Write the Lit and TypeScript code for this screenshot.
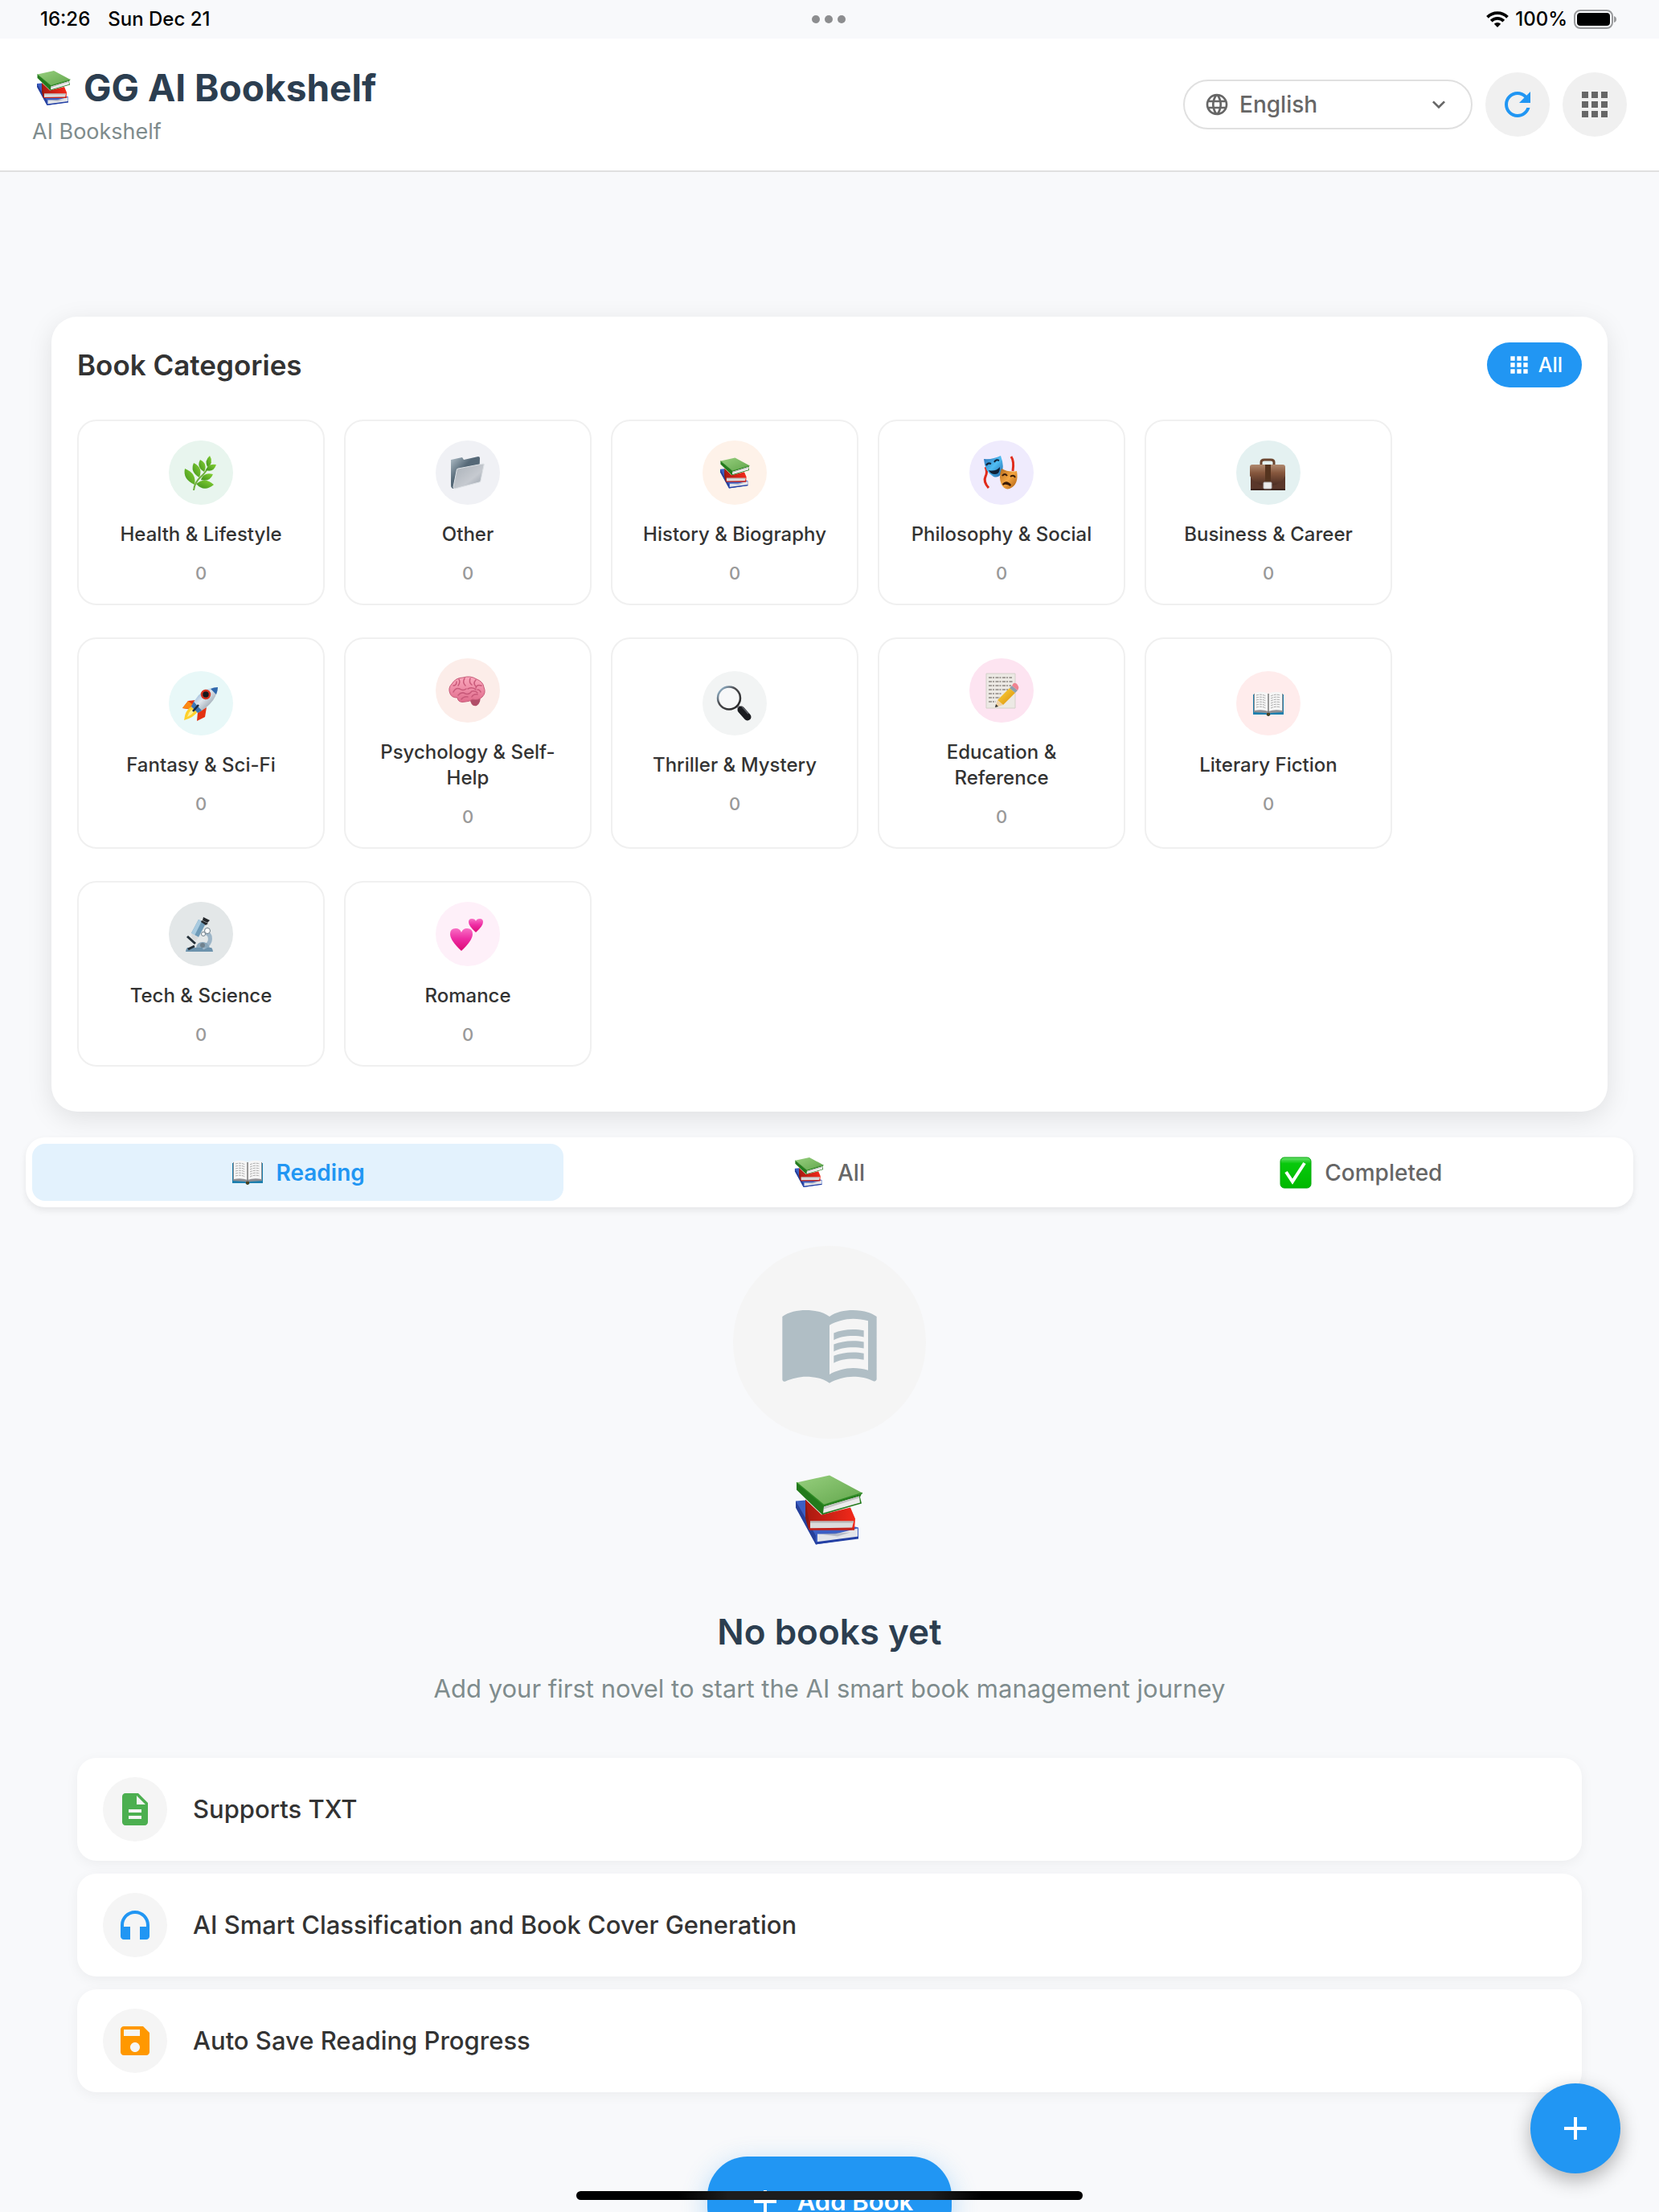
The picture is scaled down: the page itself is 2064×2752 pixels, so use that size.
import { LitElement, html, css, svg } from "lit";
import type { TemplateResult } from "lit";
import { customElement, property, state } from "lit/decorators.js";
import { classMap } from "lit/directives/class-map.js";

const ICONS: Record<string, string> = {
  language:
    "M11.99 2C6.47 2 2 6.48 2 12s4.47 10 9.99 10C17.52 22 22 17.52 22 12S17.52 2 11.99 2zm6.93 6h-2.95c-.32-1.25-.78-2.45-1.38-3.56 1.84.63 3.37 1.91 4.33 3.56zM12 4.04c.83 1.2 1.48 2.53 1.91 3.96h-3.82c.43-1.43 1.08-2.76 1.91-3.96zM4.26 14C4.1 13.36 4 12.69 4 12s.1-1.36.26-2h3.38c-.08.66-.14 1.32-.14 2s.06 1.34.14 2H4.26zm.82 2h2.95c.32 1.25.78 2.45 1.38 3.56-1.84-.63-3.37-1.9-4.33-3.56zm2.95-8H5.08c.96-1.66 2.49-2.93 4.33-3.56C8.81 5.55 8.35 6.75 8.03 8zM12 19.96c-.83-1.2-1.48-2.53-1.91-3.96h3.82c-.43 1.43-1.08 2.76-1.91 3.96zM14.34 14H9.66c-.09-.66-.16-1.32-.16-2s.07-1.35.16-2h4.68c.09.65.16 1.32.16 2s-.07 1.34-.16 2zm.25 5.56c.6-1.11 1.06-2.31 1.38-3.56h2.95c-.96 1.65-2.49 2.93-4.33 3.56zM16.36 14c.08-.66.14-1.32.14-2s-.06-1.34-.14-2h3.38c.16.64.26 1.31.26 2s-.1 1.36-.26 2h-3.38z",
  down: "M7.41 8.59 12 13.17l4.59-4.58L18 10l-6 6-6-6 1.41-1.41z",
  refresh:
    "M17.65 6.35C16.2 4.9 14.21 4 12 4c-4.42 0-7.99 3.58-7.99 8s3.57 8 7.99 8c3.73 0 6.84-2.55 7.73-6h-2.08c-.82 2.33-3.04 4-5.65 4-3.31 0-6-2.69-6-6s2.69-6 6-6c1.66 0 3.14.69 4.22 1.78L13 11h7V4l-2.35 2.35z",
  apps: "M4 8h4V4H4v4zm6 12h4v-4h-4v4zm-6 0h4v-4H4v4zm0-6h4v-4H4v4zm6 0h4v-4h-4v4zm6-10v4h4V4h-4zm-6 4h4V4h-4v4zm6 6h4v-4h-4v4zm0 6h4v-4h-4v4z",
  menuBook:
    "M21 5c-1.11-.35-2.33-.5-3.5-.5-1.95 0-4.05.4-5.5 1.5-1.45-1.1-3.55-1.5-5.5-1.5S2.45 4.9 1 6v14.65c0 .25.25.5.5.5.1 0 .15-.05.25-.05C3.1 20.45 5.05 20 6.5 20c1.95 0 4.05.4 5.5 1.5 1.35-.85 3.8-1.5 5.5-1.5 1.65 0 3.35.3 4.75 1.05.1.05.15.05.25.05.25 0 .5-.25.5-.5V6c-.6-.45-1.25-.75-2-1zm0 13.5c-1.1-.35-2.3-.5-3.5-.5-1.7 0-4.15.65-5.5 1.5V8c1.35-.85 3.8-1.5 5.5-1.5 1.2 0 2.4.15 3.5.5v11.5zM17.5 10.5c.88 0 1.73.09 2.5.26V9.24c-.79-.15-1.64-.24-2.5-.24-1.7 0-3.24.29-4.5.83v1.66c1.13-.64 2.7-.99 4.5-.99zM13 12.49v1.66c1.13-.64 2.7-.99 4.5-.99.88 0 1.73.09 2.5.26V11.9c-.79-.15-1.64-.24-2.5-.24-1.7 0-3.24.3-4.5.83zM17.5 14.33c-1.7 0-3.24.29-4.5.83v1.66c1.13-.64 2.7-.99 4.5-.99.88 0 1.73.09 2.5.26v-1.52c-.79-.16-1.64-.24-2.5-.24z",
  description:
    "M14 2H6c-1.1 0-1.99.9-1.99 2L4 20c0 1.1.89 2 1.99 2H18c1.1 0 2-.9 2-2V8l-6-6zm2 16H8v-2h8v2zm0-4H8v-2h8v2zm-3-5V3.5L18.5 9H13z",
  headphones:
    "M12 3c-4.97 0-9 4.03-9 9v7c0 1.1.9 2 2 2h4v-8H5v-1c0-3.87 3.13-7 7-7s7 3.13 7 7v1h-4v8h4c1.1 0 2-.9 2-2v-7c0-4.97-4.03-9-9-9z",
  save: "M17 3H5c-1.11 0-2 .9-2 2v14c0 1.1.89 2 2 2h14c1.1 0 2-.9 2-2V7l-4-4zm-5 16c-1.66 0-3-1.34-3-3s1.34-3 3-3 3 1.34 3 3-1.34 3-3 3zm3-10H5V5h10v4z",
  add: "M19 13h-6v6h-2v-6H5v-2h6V5h2v6h6v2z",
};

const icon = (name: string) =>
  html`<svg class="icon" viewBox="0 0 24 24" aria-hidden="true"><path fill="currentColor" d=${ICONS[name]} /></svg>`;

const booksArt = svg`
  <defs>
    <linearGradient id="bg" x1="0" y1="0" x2="1" y2="1"><stop offset="0" stop-color="#97cf7e"/><stop offset="1" stop-color="#62a64c"/></linearGradient>
    <linearGradient id="br" x1="0" y1="0" x2="1" y2="0"><stop offset="0" stop-color="#a81a10"/><stop offset="1" stop-color="#f3291a"/></linearGradient>
  </defs>
  <path fill="#3c5fc4" d="M0 32l12-1 4 34 58-1 4 1v13L25 86 0 40z"/>
  <path fill="#26409a" d="M0 32l25 43v11L0 40z"/>
  <path fill="#e3e5ea" d="M27 73l22 0 28-7 0 11-50 7z"/>
  <path fill="#9aa0b0" d="M30 73l38-2-16 5z" opacity=".6"/>
  <path fill="#2440a4" d="M25 83l53-7v3l-53 7z"/>
  <path fill="url(#br)" d="M12 30l20 19 36-9 6 14-1 14-56 0-5-20z"/>
  <path fill="#8c1a12" d="M12 30l4 24v14l-4-15z"/>
  <path fill="#dcdcdc" d="M18 57h54l-2 9H18z"/>
  <path fill="#b4b4b4" d="M18 57h54v2H18z"/>
  <path fill="#c4221a" d="M16 66l57-1v3H17z"/>
  <path fill="#237a1c" d="M1 9l33 27 48-13-2 4 2 8-49 14L1 18z"/>
  <path fill="#ececec" d="M35 39l44-13 1 8-46 13z"/>
  <path fill="#c2c2c2" d="M35 39l44-13v2L35 42z"/>
  <path fill="url(#bg)" d="M1 9L42 0l41 22-48 15z"/>
  <path fill="none" stroke="#2f8b25" stroke-width="1.5" d="M1 9l34 28 48-15"/>`;

const openBookArt = svg`
  <path fill="#1d7fae" d="M1 4h38v25H23l-3 2-3-2H1z"/>
  <path fill="#8f8f93" d="M2 3h36v23l-15 1-3 2-3-2-15-1z"/>
  <path fill="#f6f6f6" d="M3 2q9-3 17 1v22q-8-3-17-1zM37 2q-9-3-17 1v22q8-3 17-1z"/>
  <path fill="none" stroke="#a5a5a5" stroke-width="1" stroke-dasharray="3 1" d="M5 5q6-2 12 1M5 8q6-2 12 1M5 11q6-2 12 1M5 14q6-2 12 1M5 17q6-2 12 1M5 20q6-2 12 1M23 6q6-3 12-1M23 9q6-3 12-1M23 12q6-3 12-1M23 15q6-3 12-1M23 18q6-3 12-1M23 21q6-3 12-1"/>
  <path stroke="#777" stroke-width="1.5" d="M20 3v24"/>
  <path fill="#4a4220" d="M18 27h4v3l-2 1-2-1z"/>`;

const checkArt = svg`
  <defs><linearGradient id="ck" x1="0" y1="0" x2="0" y2="1"><stop offset="0" stop-color="#6be06f"/><stop offset=".2" stop-color="#08c90c"/><stop offset="1" stop-color="#00b800"/></linearGradient></defs>
  <rect x="1" y="1" width="38" height="38" rx="5" fill="url(#ck)" stroke="#04a80a" stroke-width="1"/>
  <path fill="none" stroke="#fff" stroke-width="4" d="M8 19l8 12L31 8"/>`;

const ART: Record<string, TemplateResult> = {
  leaf: svg`
    <defs><linearGradient id="lf" x1="0" y1="1" x2="1" y2="0"><stop offset="0" stop-color="#3f8f1c"/><stop offset="1" stop-color="#86d334"/></linearGradient></defs>
    <path fill="none" stroke="#6fae3c" stroke-width="2" d="M31 62Q32 52 40 45T52 27"/>
    <g fill="url(#lf)">
      <path d="M32 55Q17 48 20 35q15 6 12 20z"/>
      <path d="M38 46q-12-7-7-18 12 6 7 18z"/>
      <path d="M44 39q-10-6-5-15 10 5 5 15z"/>
      <path d="M48 33q-4-8 3-14 5 8-3 14z"/>
      <path d="M46 37q3-9 13-7-3 10-13 7z"/>
      <path d="M40 49q3-10 15-7-4 10-15 7z"/>
      <path d="M34 54q11-9 22 1-12 10-22-1z"/>
    </g>`,
  folder: svg`
    <defs>
      <linearGradient id="fb" x1="0" y1="0" x2="1" y2="1"><stop offset="0" stop-color="#b3c1ca"/><stop offset=".4" stop-color="#556877"/></linearGradient>
      <linearGradient id="ff" x1="0" y1="0" x2="1" y2="1"><stop offset="0" stop-color="#a8afb7"/><stop offset=".6" stop-color="#c6cad0"/><stop offset="1" stop-color="#8f98a3"/></linearGradient>
    </defs>
    <path fill="url(#fb)" d="M19 24l14-3 2 3 18-4q2 0 2 2l-1 26-32 12q-3-1-3-4z"/>
    <path fill="url(#ff)" stroke="#dfe3e7" stroke-width="1" d="M28 35l31-6q2 0 1 2l-4 19q0 2-2 2l-30 8q-2 0-2-2l4-20q0-3 2-3z"/>`,
  masks: svg`
    <defs>
      <linearGradient id="mb" x1="0" y1="0" x2="1" y2="1"><stop offset="0" stop-color="#2a6cb4"/><stop offset=".5" stop-color="#4fbdf2"/><stop offset="1" stop-color="#1f62a8"/></linearGradient>
      <linearGradient id="mo" x1="0" y1="0" x2="1" y2="1"><stop offset="0" stop-color="#b56a1c"/><stop offset=".5" stop-color="#f5a742"/><stop offset="1" stop-color="#a8590f"/></linearGradient>
    </defs>
    <path fill="none" stroke="#e02b1b" stroke-width="3" d="M20 33q3 6 0 12t4 14M52 20q4 6 2 18"/>
    <path fill="url(#mb)" d="M18 23q11 1 21-4 5 14 1 22-4 6-10 4-11-6-12-22z"/>
    <path fill="none" stroke="#10233a" stroke-width="2" d="M21 31q2-4 6-2M31 27q2-4 6-2"/>
    <path fill="#0e2036" d="M24 37q9 2 14-4 0 9-6 9t-8-5z"/>
    <path fill="url(#mo)" d="M40 35q9 5 19 3 3 17-9 22-6 2-10-5-4-9 0-20z"/>
    <path fill="none" stroke="#3a1c08" stroke-width="2" d="M41 44q3-4 6 0M51 45q4-3 6 1"/>
    <path fill="#3a1c08" d="M41 54q5-6 11 1l-1 2q-6-4-9-1z"/>`,
  briefcase: svg`
    <defs><linearGradient id="bc" x1="0" y1="0" x2="0" y2="1"><stop offset="0" stop-color="#b08a70"/><stop offset=".4" stop-color="#86573d"/><stop offset="1" stop-color="#4a2c22"/></linearGradient></defs>
    <path fill="none" stroke="#6b4630" stroke-width="3" d="M31 31v-4q0-3 4-3h8q4 0 4 3v4"/>
    <path fill="#5a372a" d="M18 40h43v19q0 3-3 3H21q-3 0-3-3z"/>
    <path fill="url(#bc)" d="M20 30h38q3 0 3 3v11q-4 10-16 12H34q-12-2-17-12V33q0-3 3-3z"/>
    <path fill="#55341f" d="M36 30h7v22h-7z"/>
    <path fill="#3c241c" d="M18 60h43v2H18z"/>
    <rect x="34" y="52" width="10" height="8" rx="1" fill="#ececec" stroke="#b5b5b5"/>`,
  rocket: svg`
    <defs><linearGradient id="rk" x1="0" y1="0" x2="1" y2="1"><stop offset="0" stop-color="#4d8ccc"/><stop offset=".45" stop-color="#dfe6ec"/><stop offset="1" stop-color="#5d6e7e"/></linearGradient></defs>
    <path fill="#e33212" d="M33 36l-9 1-7 9 12 2zM47 45l-2 12-10 5 1-11z"/>
    <path fill="#fb8a13" d="M24 37l-7 9 9 1 3-6z"/>
    <path fill="#ffd02b" d="M28 44q-8 5-9 17 12-3 18-12z"/>
    <path fill="#fff09a" d="M28 48q-4 4-5 9 6-3 9-7z"/>
    <path fill="url(#rk)" d="M61 20q-14 0-24 10-6 7-9 14l8 8q8-4 15-11 9-9 10-21z"/>
    <path fill="#2f68ad" d="M61 20q-5 0-9 2l7 7q2-5 2-9z"/>
    <path fill="#3b76b5" d="M31 38l-3 6 8 8 5-3z"/>
    <path stroke="#1c2b3c" stroke-width="2.5" d="M30 50l7-8"/>
    <circle cx="46" cy="29" r="5" fill="#16181c" stroke="#d5321e" stroke-width="2.5"/>`,
  brain: svg`
    <defs><linearGradient id="bn" x1="0" y1="0" x2="0" y2="1"><stop offset="0" stop-color="#fba9bd"/><stop offset="1" stop-color="#e06c8c"/></linearGradient></defs>
    <path fill="#b14d68" d="M42 49l13-2q2 8-4 12-7 2-9-10z"/>
    <path fill="url(#bn)" stroke="#c75a78" stroke-width="1" d="M18 44q-3-7 2-12 5-8 14-8 9-3 17 2 8 3 9 10 3 7-2 12-5 5-12 3-4 3-9 3-9 2-10-5-7 0-9-5z"/>
    <path fill="none" stroke="#c95a7a" stroke-width="1.5" stroke-linecap="round" d="M22 34q4 0 4-5M29 26q2 4-1 8M36 25q-3 5 1 9M43 25q-2 5 2 8M50 27q-4 4 0 8M57 34q-6-2-7 3M22 42q3-6 8-4 4 3 8 0M28 46q4-5 9-2 4 2 8-3 5-1 7 2M40 38q6-3 10 1M45 48q2-4 7-3M56 42q-1-3-4-3M32 51q3-4 8-3"/>`,
  magnifier: svg`
    <defs><linearGradient id="mg" x1="0" y1="0" x2="1" y2="1"><stop offset="0" stop-color="#a8d3f0"/><stop offset=".4" stop-color="#4c4c50"/><stop offset="1" stop-color="#222"/></linearGradient></defs>
    <path stroke="#8d8d92" stroke-width="4" d="M43 43l5 5"/>
    <path stroke="#1b1c20" stroke-width="9" stroke-linecap="round" d="M48 48l8 9"/>
    <path stroke="#5c5e66" stroke-width="1.5" d="M49 44l8 9"/>
    <circle cx="33" cy="33.500" r="14" fill="#f7f8f9" stroke="url(#mg)" stroke-width="2.500"/>`,
  memo: svg`
    <defs><linearGradient id="pc" x1="0" y1="0" x2="1" y2="1"><stop offset="0" stop-color="#ffd93f"/><stop offset="1" stop-color="#d88b08"/></linearGradient></defs>
    <path fill="#ece9e4" stroke="#d4d0ca" d="M21 19h36v43H21z"/>
    <path fill="none" stroke="#8d8882" stroke-width="1.300" stroke-dasharray="4 1 2 1.500" d="M24 24h29M24 29h30M24 34h28M24 39h24M24 44h16M24 49h14M24 54h9"/>
    <path fill="url(#pc)" d="M50 37l7 6-15 15-7-6z"/>
    <path fill="#efd1a0" d="M35 52l7 6-10 3z"/>
    <path fill="#333" d="M33 57l3 3-4 1z"/>
    <path fill="#8da0ab" d="M50 37l3-3 7 6-3 3z"/>
    <path fill="#ef8390" d="M53 34l2-3q3-1 5 2t1 5l-1 2z"/>`,
  microscope: svg`
    <path fill="#6d93ad" d="M23 57h30q2 2 2 5H21q0-3 2-5z"/>
    <path fill="none" stroke="#9db5c7" stroke-width="5" d="M45 38q8 2 6 11-2 6-9 8"/>
    <path fill="#8aa7bb" d="M34 57q1-7 8-7t9 7z"/>
    <circle cx="42" cy="54" r="3" fill="#71828e"/>
    <path stroke="#25313a" stroke-width="3" d="M23 43l10 9M24 59l8-4"/>
    <path fill="#6f9bb8" d="M37 22l9 5-9 17-9-5z"/>
    <path fill="#a9cbe0" d="M37 22l4 2-9 18-4-3z"/>
    <path fill="#23272b" d="M43 19l8 4-3 3-6-3zM41 23l8 4-3 2-6-4z"/>
    <path fill="#d8dadb" d="M28 39l9 5-3 4-5-2z"/>
    <circle cx="48" cy="36" r="3.500" fill="#fff" stroke="#6d7d88" stroke-width="1"/>
    <circle cx="43" cy="40" r="2.500" fill="#fff" stroke="#6d7d88" stroke-width="1"/>`,
  hearts: svg`
    <defs><linearGradient id="ht" x1="0" y1="0" x2="0" y2="1"><stop offset="0" stop-color="#f86fc4"/><stop offset=".45" stop-color="#ee2ea4"/><stop offset="1" stop-color="#dc0a74"/></linearGradient></defs>
    <path fill="url(#ht)" d="M32 61q-14-13-14-21 0-7 7-7 5 0 7 5 2-5 7-5 7 0 7 7 0 8-14 21z"/>
    <path fill="url(#ht)" d="M50 38q-9-8-9-13 0-4 4-4 4 0 5 3 1-3 5-3t4 4q0 5-9 13z"/>`,
};

const art = (name: string) => {
  if (name === "books")
    return html`<svg class="art-books" viewBox="0 0 84 86" aria-hidden="true">${booksArt}</svg>`;
  if (name === "open")
    return html`<svg class="art-open" viewBox="0 0 40 31" aria-hidden="true">${openBookArt}</svg>`;
  if (name === "check")
    return html`<svg class="art-check" viewBox="0 0 40 40" aria-hidden="true">${checkArt}</svg>`;
  return html`<svg class="art-full" viewBox="0 0 80 80" aria-hidden="true">${ART[name]}</svg>`;
};

const base = css`
  *, *::before, *::after { box-sizing: border-box; }
  button, select { font: inherit; color: inherit; border: 0; background: none; margin: 0; padding: 0; }
  h1, h2, p, ul { margin: 0; padding: 0; }
  svg { display: block; flex: none; }
`;

@customElement("status-bar")
class StatusBar extends LitElement {
  static styles = [base, css`
    :host { display: grid; grid-template-columns: 1fr auto 1fr; align-items: center; height: 48px; padding: 0 52px 0 50px; color: #000; font-size: 24px; font-weight: 500; line-height: 28px; flex: none; }
    .when { display: flex; gap: 22px; }
    .dots { display: flex; gap: 6px; }
    .dot { width: 10px; height: 10px; border-radius: 50%; background: #8c8d8f; }
    .power { display: flex; align-items: center; justify-content: flex-end; gap: 8px; }
    .wifi { width: 28px; height: 20px; }
    .battery { width: 54px; height: 24px; }
  `];
  render() {
    return html`
      <div class="when"><span>16:26</span><span>Sun Dec 21</span></div>
      <div class="dots"><span class="dot"></span><span class="dot"></span><span class="dot"></span></div>
      <div class="power">
        <svg class="wifi" viewBox="0 0 28 20" aria-hidden="true">
          <g fill="none" stroke="#000" stroke-width="3.800"><path d="M1.500 7.300a17.800 17.800 0 0 1 25 0"/><path d="M6.200 12.200a11 11 0 0 1 15.600 0"/></g>
          <path d="M14 20l-4.200-4.300a6 6 0 0 1 8.400 0z"/>
        </svg>
        <span>100%</span>
        <svg class="battery" viewBox="0 0 54 24" aria-hidden="true">
          <rect x="1" y="1" width="47" height="22" rx="7" fill="none" stroke="#98999b" stroke-width="2"/>
          <rect x="4" y="4" width="41" height="16" rx="4" />
          <path fill="#98999b" d="M50 8q3 1 3 4t-3 4z"/>
        </svg>
      </div>`;
  }
}

@customElement("shelf-header")
class ShelfHeader extends LitElement {
  static styles = [base, css`
    :host { display: flex; justify-content: space-between; align-items: center; padding: 31px 40px; background: #fff; border-bottom: 2px solid #e0e0e0; flex: none; }
    .brand { display: flex; flex-direction: column; gap: 8px; }
    .title { display: flex; align-items: center; gap: 16px; padding-left: 6px; font-size: 46px; line-height: 60px; font-weight: 700; color: #2c3e50; }
    .title .art-books { width: 42px; height: 43px; }
    .sub { font-size: 27px; line-height: 34px; color: #7f8c8d; }
    .tools { display: flex; align-items: center; gap: 16px; }
    .lang { display: flex; align-items: center; width: 360px; height: 62px; padding: 0 24px; border: 2px solid #e0e0e0; border-radius: 31px; color: #666; }
    .lang .icon { width: 32px; height: 32px; }
    .choice { flex: 1; min-width: 0; appearance: none; padding-left: 12px; font-size: 28px; line-height: 34px; font-weight: 500; outline: none; }
    .round { display: grid; place-items: center; width: 80px; height: 80px; border-radius: 50%; background: #f0f0f0; color: #666; }
    .round .icon { width: 48px; height: 48px; }
    .accent { color: #2196f3; }
  `];
  render() {
    return html`
      <div class="brand">
        <h1 class="title">${art("books")}<span>GG AI Bookshelf</span></h1>
        <p class="sub">AI Bookshelf</p>
      </div>
      <div class="tools">
        <label class="lang">
          ${icon("language")}
          <select class="choice" aria-label="Language"><option>English</option></select>
          ${icon("down")}
        </label>
        <button class="round accent" aria-label="Refresh">${icon("refresh")}</button>
        <button class="round" aria-label="Apps">${icon("apps")}</button>
      </div>`;
  }
}

interface Category { name: string; art: string; tint: string; count: number; }

const CATEGORIES: Category[] = [
  { name: "Health & Lifestyle", art: "leaf", tint: "#e8f5ee", count: 0 },
  { name: "Other", art: "folder", tint: "#f0f1f5", count: 0 },
  { name: "History & Biography", art: "books", tint: "#fef2e9", count: 0 },
  { name: "Philosophy & Social", art: "masks", tint: "#efebfd", count: 0 },
  { name: "Business & Career", art: "briefcase", tint: "#e4f1f1", count: 0 },
  { name: "Fantasy & Sci-Fi", art: "rocket", tint: "#e8f8f8", count: 0 },
  { name: "Psychology & Self-Help", art: "brain", tint: "#fcede9", count: 0 },
  { name: "Thriller & Mystery", art: "magnifier", tint: "#f2f4f4", count: 0 },
  { name: "Education & Reference", art: "memo", tint: "#fde4f1", count: 0 },
  { name: "Literary Fiction", art: "open", tint: "#ffecec", count: 0 },
  { name: "Tech & Science", art: "microscope", tint: "#e3e7e8", count: 0 },
  { name: "Romance", art: "hearts", tint: "#fef0f9", count: 0 },
];

@customElement("category-panel")
class CategoryPanel extends LitElement {
  @property({ attribute: false }) categories: Category[] = [];
  static styles = [base, css`
    :host { display: block; padding: 32px 32px 56px; border-radius: 32px; background: #fff; box-shadow: 0 8px 32px rgba(0, 0, 0, 0.1); }
    .head { display: flex; justify-content: space-between; align-items: center; margin-bottom: 40px; }
    .heading { font-size: 35px; line-height: 44px; font-weight: 600; color: #333; }
    .all { display: flex; align-items: center; gap: 8px; height: 56px; padding: 0 24px; border-radius: 28px; background: #2196f3; color: #fff; font-size: 25px; line-height: 32px; font-weight: 500; }
    .all .icon { width: 32px; height: 32px; }
    .grid { display: grid; grid-template-columns: repeat(auto-fill, 308px); gap: 40px 24px; }
    .card { display: flex; flex-direction: column; align-items: center; justify-content: center; padding: 24px 32px; border: 2px solid #f0f0f0; border-radius: 24px; background: #fff; }
    .disc { display: grid; place-items: center; width: 80px; height: 80px; border-radius: 50%; }
    .art-full { width: 80px; height: 80px; }
    .disc .art-books { width: 37px; height: 39px; }
    .disc .art-open { width: 40px; height: 31px; }
    .name { margin: 21px 0 19px; font-size: 24px; line-height: 32px; font-weight: 500; color: #333; text-align: center; }
    .count { font-size: 22px; line-height: 27px; font-weight: 500; color: #999; }
  `];
  render() {
    return html`
      <div class="head">
        <h2 class="heading">Book Categories</h2>
        <button class="all">${icon("apps")}<span>All</span></button>
      </div>
      <div class="grid">
        ${this.categories.map((c) => html`
          <button class="card">
            <span class="disc" style="background:${c.tint}">${art(c.art)}</span>
            <span class="name">${c.name}</span>
            <span class="count">${c.count}</span>
          </button>`)}
      </div>`;
  }
}

const TABS = [
  { id: "reading", label: "Reading", art: "open" },
  { id: "all", label: "All", art: "books" },
  { id: "completed", label: "Completed", art: "check" },
];

@customElement("shelf-tabs")
class ShelfTabs extends LitElement {
  @state() private active = "reading";
  static styles = [base, css`
    :host { display: flex; padding: 8px; border-radius: 24px; background: #fff; box-shadow: 0 4px 8px rgba(0, 0, 0, 0.08); }
    .tab { flex: 1; display: flex; align-items: center; justify-content: center; gap: 16px; height: 71px; border-radius: 16px; color: #666; font-size: 28px; line-height: 34px; font-weight: 500; }
    .on { background: #e3f2fd; color: #2196f3; font-weight: 600; }
    .art-open { width: 40px; height: 31px; }
    .art-books { width: 38px; height: 37px; }
    .art-check { width: 40px; height: 40px; }
  `];
  render() {
    return TABS.map((t) => html`
      <button class=${classMap({ tab: true, on: t.id === this.active })} aria-pressed=${t.id === this.active}
        @click=${() => (this.active = t.id)}>${art(t.art)}<span>${t.label}</span></button>`);
  }
}

const FEATURES = [
  { label: "Supports TXT", icon: "description", tone: "green" },
  { label: "AI Smart Classification and Book Cover Generation", icon: "headphones", tone: "blue" },
  { label: "Auto Save Reading Progress", icon: "save", tone: "orange" },
];

@customElement("empty-shelf")
class EmptyShelf extends LitElement {
  static styles = [base, css`
    :host { display: flex; flex-direction: column; align-items: center; padding: 48px 64px 0; }
    .disc { display: grid; place-items: center; width: 240px; height: 240px; border-radius: 50%; background: #f5f5f5; color: #b0bec5; }
    .disc .icon { width: 128px; height: 128px; }
    .art-books { width: 84px; height: 87px; margin: 45px 0 80px; }
    .heading { font-size: 44px; line-height: 57px; font-weight: 600; color: #2c3e50; }
    .hint { margin: 20px 0 64px; font-size: 31px; line-height: 44px; color: #7f8c8d; }
    .features { display: flex; flex-direction: column; gap: 16px; align-self: stretch; list-style: none; }
    .feature { display: flex; align-items: center; gap: 32px; height: 128px; padding: 0 32px; border-radius: 24px; background: #fff; box-shadow: 0 4px 16px rgba(0, 0, 0, 0.05); font-size: 31px; line-height: 40px; font-weight: 500; color: #333; }
    .badge { display: grid; place-items: center; width: 80px; height: 80px; border-radius: 50%; background: #f5f5f5; }
    .badge .icon { width: 48px; height: 48px; }
    .green { color: #4caf50; }
    .blue { color: #2196f3; }
    .orange { color: #ff9800; }
    .add { display: flex; align-items: center; gap: 16px; height: 112px; margin-top: 80px; padding: 0 48px; border-radius: 50px; background: #2196f3; color: #fff; font-size: 31px; line-height: 40px; font-weight: 600; box-shadow: 0 8px 32px rgba(33, 150, 243, 0.3); }
    .add .icon { width: 48px; height: 48px; }
  `];
  render() {
    return html`
      <div class="disc">${icon("menuBook")}</div>
      ${art("books")}
      <h2 class="heading">No books yet</h2>
      <p class="hint">Add your first novel to start the AI smart book management journey</p>
      <ul class="features">
        ${FEATURES.map((f) => html`
          <li class="feature"><span class="badge ${f.tone}">${icon(f.icon)}</span><span>${f.label}</span></li>`)}
      </ul>
      <button class="add">${icon("add")}<span>Add Book</span></button>`;
  }
}

@customElement("app-root")
class AppRoot extends LitElement {
  static styles = [base, css`
    :host { position: relative; display: flex; flex-direction: column; height: 100vh; overflow: hidden; background: #f8f9fb; font-family: Inter, "Liberation Sans", sans-serif; }
    .content { flex: 1; min-height: 0; overflow: hidden; padding: 180px 32px 0; }
    .panel { margin: 0 32px 32px; }
    .fab { position: absolute; right: 48px; bottom: 48px; display: grid; place-items: center; width: 112px; height: 112px; border-radius: 50%; background: #2196f3; color: #fff; box-shadow: 0 8px 24px rgba(0, 0, 0, 0.3); }
    .fab .icon { width: 48px; height: 48px; }
    .home { position: absolute; left: 50%; bottom: 15px; width: 630px; height: 11px; margin-left: -315px; border-radius: 6px; background: linear-gradient(90deg, #000 20%, #1d1d1d 30%, #1d1d1d 70%, #000 80%); }
  `];
  render() {
    return html`
      <status-bar></status-bar>
      <shelf-header></shelf-header>
      <main class="content">
        <category-panel class="panel" .categories=${CATEGORIES}></category-panel>
        <shelf-tabs></shelf-tabs>
        <empty-shelf></empty-shelf>
      </main>
      <button class="fab" aria-label="Add book">${icon("add")}</button>
      <div class="home"></div>`;
  }
}
